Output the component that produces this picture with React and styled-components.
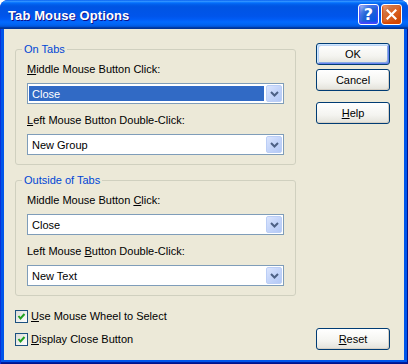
import React from 'react'
import styled, { createGlobalStyle } from 'styled-components'

const GlobalStyle = createGlobalStyle`
    html, body {
        margin: 0;
        padding: 0;
        background: #ffffff;
    }
    body {
        font-family: "Liberation Sans", Arial, sans-serif;
        font-size: 11px;
        color: #000;
    }
`

function ChevronDown() {
    return (
        <svg width="9" height="6" viewBox="0 0 9 6">
            <polyline points="1,1 4.5,4.5 8,1" fill="none" stroke="#4D6185" strokeWidth="2" />
        </svg>
    )
}

function Check() {
    return (
        <svg width="11" height="11" viewBox="0 0 11 11">
            <polyline points="2.5,5 4.5,7.5 8.5,3" fill="none" stroke="#21A121" strokeWidth="2" />
        </svg>
    )
}

function CloseGlyph() {
    return (
        <svg width="11" height="11" viewBox="0 0 11 11">
            <path d="M1.5 1.5 L9.5 9.5 M9.5 1.5 L1.5 9.5" stroke="#fff" strokeWidth="2.2" strokeLinecap="square" />
        </svg>
    )
}

function ComboBox({ value, selected }) {
    return (
        <Combo>
            <ComboText $selected={selected}>{value}</ComboText>
            <DropButton><ChevronDown /></DropButton>
        </Combo>
    )
}

function Field({ label, value, selected }) {
    return (
        <FieldWrap>
            <Label>{label}</Label>
            <ComboBox value={value} selected={selected} />
        </FieldWrap>
    )
}

function App() {
    return (
        <>
            <GlobalStyle />
            <Window>
                <TitleBar>
                    <Title>Tab Mouse Options</Title>
                    <TitleButton $kind="help">?</TitleButton>
                    <TitleButton $kind="close"><CloseGlyph /></TitleButton>
                </TitleBar>
                <Frame>
                    <Body>
                        <LeftColumn>
                            <Group>
                                <Legend>On Tabs</Legend>
                                <Field label={<><u>M</u>iddle Mouse Button Click:</>} value="Close" selected />
                                <Field label={<><u>L</u>eft Mouse Button Double-Click:</>} value="New Group" />
                            </Group>
                            <Group>
                                <Legend>Outside of Tabs</Legend>
                                <Field label={<>Middle Mouse Button <u>C</u>lick:</>} value="Close" />
                                <Field label={<>Left Mouse <u>B</u>utton Double-Click:</>} value="New Text" />
                            </Group>
                            <Checks>
                                <CheckRow>
                                    <CheckBox><Check /></CheckBox>
                                    <span><u>U</u>se Mouse Wheel to Select</span>
                                </CheckRow>
                                <CheckRow>
                                    <CheckBox><Check /></CheckBox>
                                    <span><u>D</u>isplay Close Button</span>
                                </CheckRow>
                            </Checks>
                        </LeftColumn>
                        <RightColumn>
                            <Button $default>OK</Button>
                            <Button>Cancel</Button>
                            <Button $gap>
                                <span><u>H</u>elp</span>
                            </Button>
                            <Button $bottom>
                                <span><u>R</u>eset</span>
                            </Button>
                        </RightColumn>
                    </Body>
                </Frame>
            </Window>
        </>
    )
}

export default App

const Window = styled.div`
    width: 408px;
    height: 364px;
    display: flex;
    flex-direction: column;
    border-radius: 8px 8px 0 0;
    overflow: hidden;
    background: #0831D9;
`

const TitleBar = styled.div`
    height: 29px;
    flex: none;
    display: flex;
    align-items: center;
    gap: 2px;
    padding: 0 6px 0 8px;
    box-sizing: border-box;
    background: linear-gradient(to bottom,
        #0058EE 0%, #3593FF 4%, #288EFF 6%, #127DFF 8%, #036FFC 10%,
        #0262EE 14%, #0057E5 20%, #0054E3 24%, #0055EB 56%, #005BF5 66%,
        #026AFE 76%, #0062EF 86%, #0052D6 92%, #0040AB 94%, #003092 100%);
`

const Title = styled.div`
    flex: 1;
    color: #fff;
    font-weight: bold;
    font-size: 13px;
    letter-spacing: 0.1px;
    text-shadow: 1px 1px #0F1089;
    padding-top: 1px;
`

const TitleButton = styled.div`
    width: 21px;
    height: 21px;
    box-sizing: border-box;
    border: 1px solid #fff;
    border-radius: 3px;
    display: flex;
    align-items: center;
    justify-content: center;
    color: #fff;
    font-weight: bold;
    font-size: 16px;
    font-family: "DejaVu Sans", sans-serif;
    background: ${p => p.$kind === 'close'
        ? 'radial-gradient(circle at 90% 90%, #CC4600 0%, #DC6527 55%, #CD7546 70%, #EE9A73 90%, #FFF 100%)'
        : 'radial-gradient(circle at 90% 90%, #0054E9 0%, #2263D5 55%, #4479E4 70%, #A3BBEC 90%, #FFF 100%)'};
    box-shadow: ${p => p.$kind === 'close'
        ? 'inset 0 -1px 2px 1px #DA4600'
        : 'inset 0 -1px 2px 1px #4646FF'};
`

const Frame = styled.div`
    flex: 1;
    display: flex;
    padding: 0 4px 4px;
    background: #0055EA;
    box-shadow: inset 1px 0 #0831D9, inset -1px 0 #00138C, inset 0 -1px #00138C, inset 0 -2px #001EA0;
`

const Body = styled.div`
    flex: 1;
    background: #ECE9D8;
    display: grid;
    grid-template-columns: 281px 74px;
    column-gap: 20px;
    padding: 13px 14px 10px 11px;
`

const LeftColumn = styled.div`
    display: flex;
    flex-direction: column;
    padding-bottom: 4px;
`

const Group = styled.fieldset`
    margin: 0 0 8px;
    padding: 0 11px 9px;
    min-width: 0;
    border: 1px solid #D0D0BF;
    border-radius: 3px;
    display: flex;
    flex-direction: column;
    gap: 10px;
`

const Legend = styled.legend`
    padding: 0 2px;
    margin-left: -5px;
    line-height: 14px;
    color: #0046D5;
`

const FieldWrap = styled.div`
    display: flex;
    flex-direction: column;
    &:first-of-type {
        margin-top: 7px;
    }
`

const Label = styled.div`
    line-height: 13px;
    margin-bottom: 7px;
`

const Combo = styled.div`
    height: 21px;
    box-sizing: border-box;
    border: 1px solid #7F9DB9;
    background: #fff;
    display: flex;
    padding: 1px;
`

const ComboText = styled.div`
    flex: 1;
    display: flex;
    align-items: center;
    padding-left: 3px;
    margin: 1px 2px 1px 0;
    background: ${p => p.$selected ? '#316AC5' : 'transparent'};
    color: ${p => p.$selected ? '#fff' : '#000'};
`

const DropButton = styled.div`
    width: 16px;
    box-sizing: border-box;
    border: 1px solid #BBCEF6;
    border-radius: 2px;
    display: flex;
    align-items: center;
    justify-content: center;
    background: linear-gradient(135deg, #DBE5FD 0%, #C6D6FA 45%, #B3C8F5 100%);
`

const Checks = styled.div`
    margin-top: 6px;
    display: flex;
    flex-direction: column;
    gap: 10px;
`

const CheckRow = styled.div`
    display: flex;
    align-items: center;
    gap: 3px;
    line-height: 13px;
`

const CheckBox = styled.div`
    width: 13px;
    height: 13px;
    box-sizing: border-box;
    border: 1px solid #1C5180;
    background: linear-gradient(135deg, #DCDCD7 0%, #FFFFFF 100%);
    display: flex;
    align-items: center;
    justify-content: center;
`

const RightColumn = styled.div`
    display: flex;
    flex-direction: column;
    padding-top: 1px;
    gap: 4px;
`

const Button = styled.div`
    height: 22px;
    box-sizing: border-box;
    border: 1px solid #003C74;
    border-radius: 3px;
    display: flex;
    align-items: center;
    justify-content: center;
    background: linear-gradient(180deg, #FFFFFF 0%, #F4F4F0 60%, #E3E2DA 100%);
    box-shadow: ${p => p.$default
        ? 'inset 1px 1px #CEE7FF, inset -1px -1px #6982EE, inset 2px 2px #BCD4F6, inset -2px -2px #89ADE4'
        : 'inset -1px -1px #D6D0C5'};
    margin-top: ${p => p.$gap ? '7px' : p.$bottom ? 'auto' : '0'};
`
